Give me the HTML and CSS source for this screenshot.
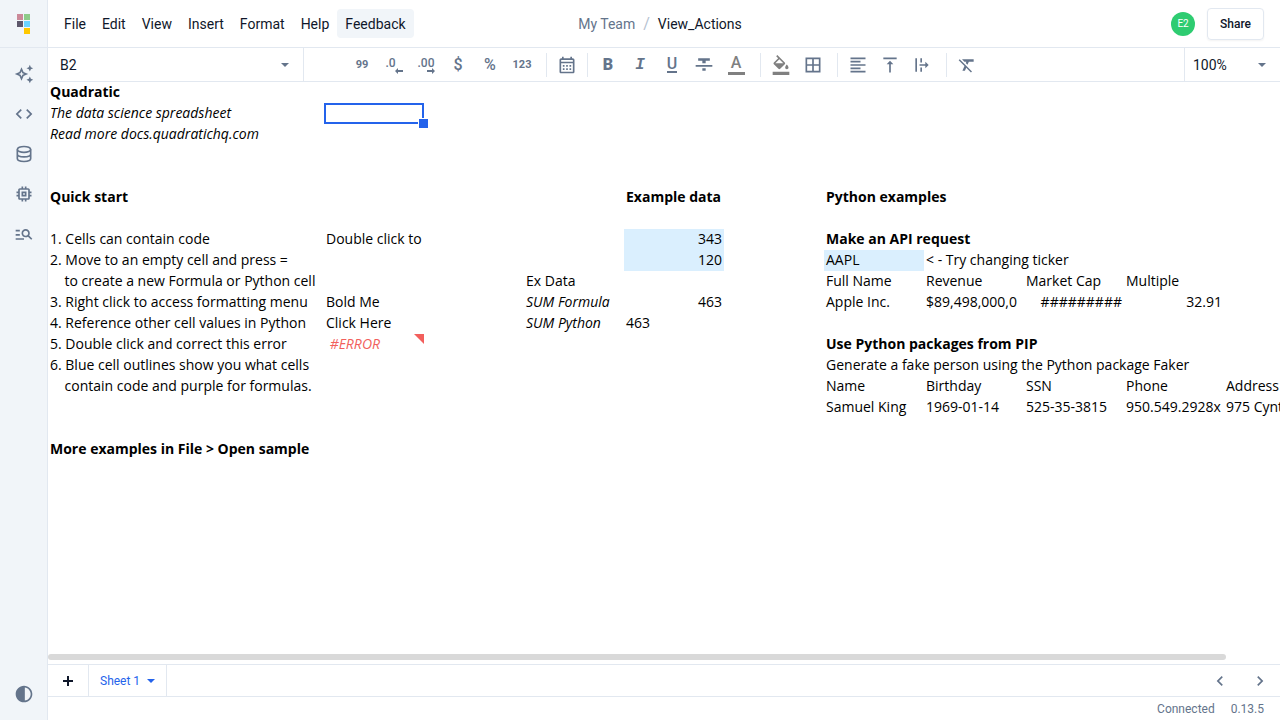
FILE: index.html
```
<!DOCTYPE html>
<html lang="en">
<head>
<meta charset="utf-8">
<title>View_Actions - Quadratic</title>
<link rel="stylesheet" href="styles.css">
</head>
<body>
<div class="app">
  <nav class="sidebar" aria-label="Main">
    <a class="logo" href="#" aria-label="Quadratic">
      <svg width="13" height="20" viewBox="0 0 13 20"><path fill="#cb8999" d="M0 0h6v6H0z"/><path fill="#8ecb89" d="M7 0h6v6H7z"/><path fill="#5d576b" d="M0 7h6v6H0z"/><path fill="#6cd4ff" d="M7 7h6v6H7z"/><path fill="#ffc800" d="M7 14h6v6H7z"/></svg>
    </a>
    <button class="side-btn" aria-label="AI assistant"><svg class="icon" viewBox="0 0 24 24"><path d="m19 9 1.250-2.750L23 5l-2.750-1.250L19 1l-1.250 2.750L15 5l2.750 1.250zm0 6-1.250 2.750L15 19l2.750 1.250L19 23l1.250-2.750L23 19l-2.750-1.250zm-7.500-5.500L9 4 6.500 9.500 1 12l5.500 2.500L9 20l2.500-5.500L17 12zm-1.510 3.490L9 15.170l-.990-2.180L5.830 12l2.180-.990L9 8.830l.990 2.180 2.180.990z"/></svg></button>
    <button class="side-btn" aria-label="Code"><svg class="icon" viewBox="0 0 24 24"><path d="M9.400 16.600 4.800 12l4.600-4.600L8 6l-6 6 6 6zm5.200 0 4.600-4.600-4.600-4.600L16 6l6 6-6 6z"/></svg></button>
    <button class="side-btn" aria-label="Connections"><svg class="icon line" viewBox="0 0 24 24"><ellipse cx="12" cy="6.500" rx="8" ry="3.500"/><path d="M4 6.500v11c0 2 3.600 3.500 8 3.500s8-1.500 8-3.500v-11M4 12c0 2 3.600 3.500 8 3.500s8-1.500 8-3.500"/></svg></button>
    <button class="side-btn" aria-label="Kernel"><svg class="icon" viewBox="0 0 24 24"><path d="M15 9H9v6h6zm-2 4h-2v-2h2zm8-2V9h-2V7c0-1.100-.9-2-2-2h-2V3h-2v2h-2V3H9v2H7c-1.100 0-2 .9-2 2v2H3v2h2v2H3v2h2v2c0 1.100.9 2 2 2h2v2h2v-2h2v2h2v-2h2c1.100 0 2-.9 2-2v-2h2v-2h-2v-2zm-4 6H7V7h10z"/></svg></button>
    <button class="side-btn" aria-label="Find in sheet"><svg class="icon" viewBox="0 0 24 24"><path d="M7 9H2V7h5zm0 3H2v2h5zm13.590 7-3.830-3.830c-.8.520-1.740.830-2.760.830-2.760 0-5-2.240-5-5s2.240-5 5-5 5 2.240 5 5c0 1.020-.310 1.960-.830 2.750L22 17.590zM17 11c0-1.650-1.350-3-3-3s-3 1.350-3 3 1.350 3 3 3 3-1.350 3-3M2 19h10v-2H2z"/></svg></button>
    <button class="side-btn theme" aria-label="Theme"><svg class="icon" viewBox="0 0 24 24"><path d="M12 22c5.520 0 10-4.480 10-10S17.520 2 12 2 2 6.480 2 12s4.480 10 10 10m1-17.930c3.940.490 7 3.850 7 7.930s-3.050 7.440-7 7.930z"/></svg></button>
  </nav>

  <div class="main">
    <header class="topbar">
      <div class="menus">
        <button class="menu">File</button><button class="menu">Edit</button><button class="menu">View</button><button class="menu">Insert</button><button class="menu">Format</button><button class="menu">Help</button><button class="menu feedback">Feedback</button>
      </div>
      <div class="crumbs"><a href="#" class="team">My Team</a><span class="slash">/</span><button class="filename">View_Actions</button></div>
      <div class="account"><span class="avatar">E2</span><button class="share">Share</button></div>
    </header>

    <div class="toolbar">
      <div class="position">
        <input class="cell-name" type="text" value="B2" aria-label="Cell position">
        <button class="caret-btn" aria-label="Go to"><svg class="caret" viewBox="0 0 8 4"><path d="M0 0h8L4 4z"/></svg></button>
      </div>
      <div class="tools">
        <button class="tool quote" aria-label="Commas">99</button>
        <button class="tool decimal" aria-label="Decrease decimals"><span>.0</span><svg class="arrow" viewBox="0 0 8 6"><path d="M3 0v2h5v2H3v2L0 3z"/></svg></button>
        <button class="tool decimal" aria-label="Increase decimals"><span>.00</span><svg class="arrow" viewBox="0 0 8 6"><path d="M5 0v2H0v2h5v2l3-3z"/></svg></button>
        <button class="tool symbol" aria-label="Currency">$</button>
        <button class="tool symbol" aria-label="Percent">%</button>
        <button class="tool digits" aria-label="Number format">123</button>
        <span class="sep"></span>
        <button class="tool" aria-label="Date format"><svg class="icon" viewBox="0 0 24 24"><path d="M19 4h-1V2h-2v2H8V2H6v2H5c-1.100 0-2 .9-2 2v14c0 1.100.9 2 2 2h14c1.100 0 2-.9 2-2V6c0-1.100-.9-2-2-2m0 16H5V10h14zm0-12H5V6h14zM7 12h2v2H7zm4 0h2v2h-2zm4 0h2v2h-2zm-8 4h2v2H7zm4 0h2v2h-2zm4 0h2v2h-2z"/></svg></button>
        <span class="sep even"></span>
        <button class="tool letter" aria-label="Bold"><b>B</b></button>
        <button class="tool letter slant" aria-label="Italic">I</button>
        <button class="tool letter under" aria-label="Underline"><span>U</span></button>
        <button class="tool" aria-label="Strikethrough"><svg class="icon" viewBox="0 0 24 24"><path d="M10 19h4v-3h-4zM5 4v3h5v3h4V7h5V4zM2 14h20v-2H2z"/></svg></button>
        <button class="tool color-text" aria-label="Text color"><span>A</span></button>
        <span class="sep"></span>
        <button class="tool grey" aria-label="Fill color"><svg class="icon" viewBox="0 0 24 24"><path d="M16.560 8.940 7.620 0 6.210 1.410l2.380 2.380-5.150 5.150c-.590.590-.590 1.540 0 2.120l5.500 5.500c.290.290.680.440 1.060.440s.770-.150 1.060-.440l5.500-5.500c.590-.580.590-1.530 0-2.120M5.210 10 10 5.210 14.790 10zM19 11.500s-2 2.170-2 3.500c0 1.100.9 2 2 2s2-.9 2-2c0-1.330-2-3.500-2-3.500M2 20h20v4H2z"/></svg></button>
        <button class="tool" aria-label="Borders"><svg class="icon" viewBox="0 0 24 24"><path d="M3 3v18h18V3zm8 16H5v-6h6zm0-8H5V5h6zm8 8h-6v-6h6zm0-8h-6V5h6z"/></svg></button>
        <span class="sep"></span>
        <button class="tool" aria-label="Align"><svg class="icon" viewBox="0 0 24 24"><path d="M15 15H3v2h12zm0-8H3v2h12zM3 13h18v-2H3zm0 8h18v-2H3zM3 3v2h18V3z"/></svg></button>
        <button class="tool" aria-label="Vertical align"><svg class="icon" viewBox="0 0 24 24"><path d="M8 11h3v10h2V11h3l-4-4zM4 3v2h16V3z"/></svg></button>
        <button class="tool" aria-label="Text wrap"><svg class="icon" viewBox="0 0 24 24"><path d="M4 4h2v16H4zM10 4h2v5h-2zm0 11h2v5h-2zM9 11h7V8l4 4-4 4v-3H9z"/></svg></button>
        <span class="sep"></span>
        <button class="tool" aria-label="Clear formatting"><svg class="icon" viewBox="0 0 24 24"><path d="M3.270 5 2 6.270l6.970 6.970L6.500 19h3l1.570-3.660L16.730 21 18 19.730 3.550 5.270zM6 5v.180L8.820 8h2.400l-.720 1.680 2.100 2.100L14.210 8H20V5z"/></svg></button>
      </div>
      <div class="zoom">
        <select class="zoom-select" aria-label="Zoom"><option>100%</option></select>
        <svg class="caret" viewBox="0 0 8 4"><path d="M0 0h8L4 4z"/></svg>
      </div>
    </div>

    <div class="sheet">
      <table class="grid">
        <colgroup><col class="wide"><col><col><col><col><col><col><col><col><col><col></colgroup>
        <tbody>
        <tr><th>Quadratic</th><td></td><td></td><td></td><td></td><td></td><td></td><td></td><td></td><td></td><td></td></tr>
        <tr><td class="it">The data science spreadsheet</td><td class="selected"></td></tr>
        <tr><td class="it">Read more docs.quadratichq.com</td></tr>
        <tr><td></td></tr>
        <tr><td></td></tr>
        <tr><th>Quick start</th><td></td><td></td><td></td><th>Example data</th><td></td><th>Python examples</th></tr>
        <tr><td></td></tr>
        <tr><td>1. Cells can contain code</td><td>Double click to</td><td></td><td></td><td class="num blue">343</td><td></td><th>Make an API request</th></tr>
        <tr><td>2. Move to an empty cell and press =</td><td></td><td></td><td></td><td class="num blue">120</td><td></td><td class="blue">AAPL</td><td>&lt; - Try changing ticker</td></tr>
        <tr><td>    to create a new Formula or Python cell</td><td></td><td></td><td>Ex Data</td><td></td><td></td><td>Full Name</td><td>Revenue</td><td>Market Cap</td><td>Multiple</td></tr>
        <tr><td>3. Right click to access formatting menu</td><td>Bold Me</td><td></td><td class="it">SUM Formula</td><td class="num">463</td><td></td><td>Apple Inc.</td><td>$89,498,000,0</td><td class="num">#########</td><td class="num">32.91</td></tr>
        <tr><td>4. Reference other cell values in Python</td><td>Click Here</td><td></td><td class="it">SUM Python</td><td>463</td></tr>
        <tr><td>5. Double click and correct this error</td><td class="error"> #ERROR</td><td></td><td></td><td></td><td></td><th>Use Python packages from PIP</th></tr>
        <tr><td>6. Blue cell outlines show you what cells</td><td></td><td></td><td></td><td></td><td></td><td>Generate a fake person using the Python package Faker</td></tr>
        <tr><td>    contain code and purple for formulas.</td><td></td><td></td><td></td><td></td><td></td><td>Name</td><td>Birthday</td><td>SSN</td><td>Phone</td><td>Address</td></tr>
        <tr><td></td><td></td><td></td><td></td><td></td><td></td><td>Samuel King</td><td>1969-01-14</td><td>525-35-3815</td><td>950.549.2928x</td><td>975 Cynt</td></tr>
        <tr><td></td></tr>
        <tr><th>More examples in File &gt; Open sample</th></tr>
        </tbody>
      </table>
      <div class="scroll"><div class="thumb"></div></div>
    </div>

    <div class="tabs">
      <button class="add" aria-label="Add sheet"><svg viewBox="0 0 10 10" width="10" height="10"><path d="M4 0h2v4h4v2H6v4H4V6H0V4h4z"/></svg></button>
      <button class="tab">Sheet 1<svg class="caret" viewBox="0 0 8 4"><path d="M0 0h8L4 4z"/></svg></button>
      <div class="tab-nav">
        <button class="nav-btn" aria-label="Scroll left"><svg class="icon" viewBox="0 0 24 24"><path d="M15.410 7.410 14 6l-6 6 6 6 1.410-1.410L10.830 12z"/></svg></button>
        <button class="nav-btn" aria-label="Scroll right"><svg class="icon" viewBox="0 0 24 24"><path d="M10 6 8.590 7.410 13.170 12l-4.580 4.590L10 18l6-6z"/></svg></button>
      </div>
    </div>
    <footer class="status"><span>Connected</span><span>0.13.5</span></footer>
  </div>
</div>
</body>
</html>
```
FILE: styles.css
```
* { box-sizing: border-box; }
body { margin: 0; font-family: Roboto, "Liberation Sans", sans-serif; font-size: 14px; color: #0f172a; background: #fff; }
button, input, select { font: inherit; color: inherit; background: none; border: 0; padding: 0; margin: 0; }
a { color: inherit; text-decoration: none; }
svg { display: block; fill: currentColor; }
.icon { width: 20px; height: 20px; }
.line { fill: none; stroke: currentColor; stroke-width: 2; }
.caret { width: 8px; height: 4px; color: #64748b; }

.app { display: flex; height: 100vh; overflow: hidden; }
.sidebar { flex: none; display: flex; flex-direction: column; align-items: center; width: 48px; background: #f1f5f9; border-right: 1px solid #e2e8f0; color: #64748b; }
.logo { display: flex; align-items: center; justify-content: center; width: 100%; height: 48px; margin-bottom: 6px; border-bottom: 1px solid #e2e8f0; }
.side-btn { display: flex; align-items: center; justify-content: center; width: 40px; height: 40px; }
.theme { margin-top: auto; margin-bottom: 6px; }
.main { flex: 1; min-width: 0; display: flex; flex-direction: column; }

.topbar { flex: none; display: grid; grid-template-columns: 1fr auto 1fr; align-items: center; height: 48px; padding: 0 16px 0 8px; border-bottom: 1px solid #e2e8f0; }
.menus { display: flex; }
.menu { height: 29px; padding: 0 8px; border-radius: 4px; }
.feedback { background: #f1f5f9; }
.crumbs { display: flex; align-items: center; gap: 8px; }
.team { color: #64748b; }
.slash { color: #b6c2d1; font-size: 16px; }
.account { display: flex; align-items: center; justify-content: flex-end; gap: 12px; }
.avatar { display: flex; align-items: center; justify-content: center; width: 24px; height: 24px; border-radius: 50%; background: #2ecc71; color: #fff; font-size: 10px; }
.share { height: 32px; padding: 0 12px; border: 1px solid #e2e8f0; border-radius: 4px; box-shadow: 0 1px 2px #0000000d; font-size: 12px; font-weight: 500; }

.toolbar { flex: none; display: flex; height: 34px; border-bottom: 1px solid #e2e8f0; }
.position { flex: none; display: flex; align-items: center; width: 256px; padding: 0 14px 0 12px; border-right: 1px solid #e2e8f0; }
.cell-name { flex: 1; min-width: 0; }
.tools { flex: 1; min-width: 0; display: flex; align-items: center; padding-left: 42px; color: #64748b; }
.tool { flex: none; display: flex; align-items: center; justify-content: center; width: 32px; height: 32px; }
.sep { flex: none; width: 1px; height: 24px; margin: 0 4px 0 8px; background: #e2e8f0; }
.sep.even { margin-left: 4px; }
.quote { font-size: 11px; font-weight: 700; }
.decimal { position: relative; align-items: flex-start; font-size: 12px; font-weight: 500; line-height: 28px; }
.decimal span { width: 17px; text-align: left; }
.arrow { position: absolute; right: 7px; bottom: 7px; width: 8px; height: 6px; }
.symbol { font-size: 16px; font-weight: 500; }
.digits { font-size: 11px; font-weight: 700; }
.letter { font-size: 16px; font-weight: 700; }
.slant { font-family: "Liberation Mono", monospace; font-style: italic; }
.under span { height: 16px; border-bottom: 2px solid; font-weight: 500; line-height: 13px; }
.color-text, .grey { color: #808080; }
.color-text { padding-top: 2px; }
.color-text span { width: 17px; height: 19px; border-bottom: 3px solid; font-size: 16px; font-weight: 500; line-height: 14px; }
.zoom { position: relative; flex: none; width: 96px; border-left: 1px solid #e2e8f0; }
.zoom-select { width: 100%; height: 100%; padding-left: 8px; appearance: none; }
.zoom .caret { position: absolute; right: 14px; top: 15px; pointer-events: none; }

.sheet { position: relative; flex: 1; min-height: 0; overflow: hidden; font-family: "Open Sans", "Noto Sans", sans-serif; color: #000; }
.grid { table-layout: fixed; width: 1276px; border-collapse: collapse; }
.grid col { width: 100px; }
.grid .wide { width: 276px; }
.grid tr { height: 21px; }
.grid td, .grid th { height: 21px; padding: 0 2px; line-height: 20px; text-align: left; white-space: pre; font-weight: 400; vertical-align: top; }
.grid th { font-weight: 700; }
.grid .it { font-style: italic; }
.grid .num { text-align: right; }
.grid .blue { background: #daeffe; }
.grid .selected, .grid .error { position: relative; }
.selected::before { content: ""; position: absolute; inset: 0; border: 2px solid #2463eb; }
.selected::after { content: ""; position: absolute; right: -4px; bottom: -4px; width: 9px; height: 9px; background: #2463eb; border: solid #fff; border-width: 1px 0 0 1px; }
.grid .error { color: #f25f5c; font-style: italic; }
.error::after { content: ""; position: absolute; right: 0; top: 0; border: 5px solid; border-color: #f25f5c #f25f5c transparent transparent; }
.scroll { position: absolute; left: 0; right: 0; bottom: 4px; height: 6px; }
.thumb { width: 95.6%; height: 100%; border-radius: 3px; background: #d9d9d9; }

.tabs { flex: none; display: flex; height: 33px; border: solid #e2e8f0; border-width: 1px 0; }
.add { display: flex; align-items: center; justify-content: center; width: 41px; border-right: 1px solid #e2e8f0; }
.tab { display: flex; align-items: center; gap: 7px; padding: 0 11px; background: #fff; border-right: 1px solid #e2e8f0; color: #2463eb; font-size: 12px; }
.tab .caret { color: #2463eb; }
.tab-nav { display: flex; margin-left: auto; }
.nav-btn { display: flex; align-items: center; justify-content: center; width: 40px; color: #64748b; }
.status { flex: none; display: flex; align-items: center; justify-content: flex-end; gap: 16px; height: 23px; padding: 0 16px; color: #64748b; font-size: 12px; }
```
